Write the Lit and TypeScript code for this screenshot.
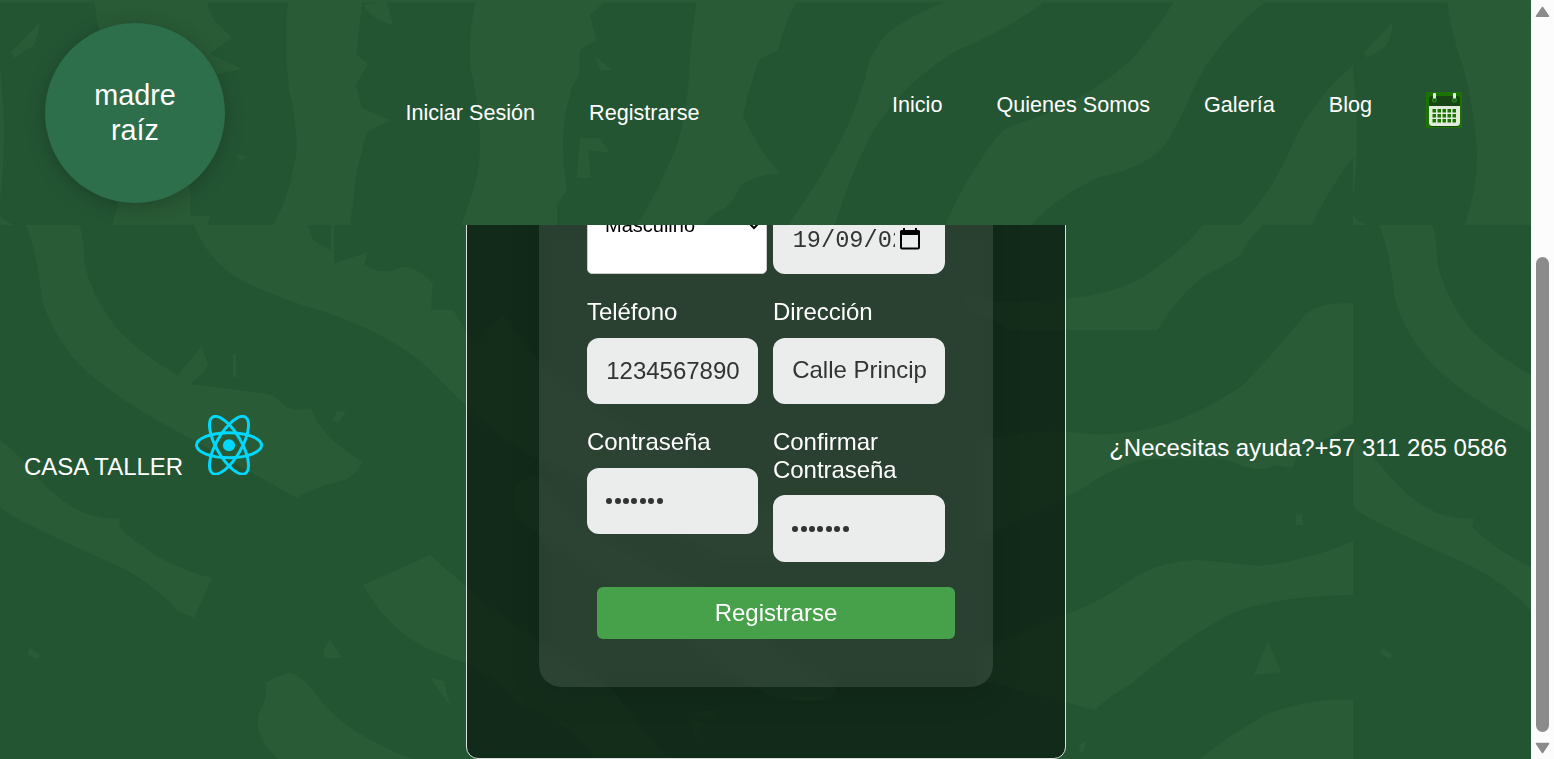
import { LitElement, html, css, svg } from "lit";
import { customElement } from "lit/decorators.js";

/* Organic shapes of the leafy wallpaper: one 1353px wide tile. */
const HEADER_SHAPES = [
  "M0 70Q8 135 0 200ZM0 216Q6 222 14 225H0Z",
  "M40 22Q39 36 33 46L14 58L11 52Z",
  "M94 0Q98 35 110 66Q121 110 124 150Q125 185 112 225H207L210 216H191L190 188L180 150L218 74L242 69L210 54L232 38L214 20L208 8V0Z",
  "M288 0Q284 50 289 90Q301 140 294 165Q288 200 273 225H350L357 170L367 132L391 120L362 108L356 85L368 64L356 54L360 20L363 0Z",
  "M363 5Q372 20 393 25L386 0Z",
  "M476 0Q467 40 471 70Q483 120 479 165Q474 195 461 225H557V205L567 190Q560 150 565 115L572 87L579 75L580 50L596 40L590 15L606 0Z",
  "M594 55L612 70L600 70Z",
  "M580 138H600L610 153L588 150L591 178H577Z",
  "M697 0Q690 40 689 75Q686 125 672 157Q655 197 637 225H703Q716 211 722 210Q732 205 740 186Q752 176 780 173Q758 150 743 115Q750 85 759 60L778 50Q785 22 797 0Z",
  "M950 0Q900 20 885 36Q868 55 865 80Q855 110 842 138Q820 180 788 225H835Q850 175 872 133Q905 80 958 50Q1015 26 1046 0Z",
  "M1175 0Q1155 32 1135 56Q1090 100 1020 123Q1003 128 996 138Q965 178 945 225H1031Q1060 194 1100 177Q1152 166 1168 140Q1183 115 1192 92Q1214 42 1268 0Z",
  "M1353 65Q1308 105 1290 150Q1270 195 1240 225H1312Q1325 195 1353 157Z",
  "M236 155L247 156L241 161Z",
];
const BODY_SHAPES = [
  "M26 225Q37 252 42 300Q58 350 97 380Q130 407 193 440L297 498Q310 488 345 480Q358 472 363 462Q320 437 311 408Q292 413 283 404Q274 393 262 393L190 384L205 371L208 365L202 346L178 375Q145 357 118 330Q90 295 84 260Q84 235 79 225Z",
  "M233 354H236V377H233Z",
  "M0 440Q20 455 40 480Q80 523 121 518L119 527Q160 566 212 578L194 618L178 611Q155 585 120 567Q60 540 30 525Q5 513 0 506Z",
  "M194 225Q204 253 230 273Q250 288 305 306Q380 327 425 365L466 406Q510 450 560 470L720 560H840Q740 480 640 430Q550 390 503 315L475 345L453 310H431L433 283Q410 262 400 268Q385 276 364 265L368 252L335 263L330 250L313 240L308 225Z",
  "M331 225H334V262H331Z",
  "M430 555L363 585Q395 645 466 663Q500 680 520 705Q570 720 595 759H668L612 690L507 620Q475 595 430 555Z",
  "M289 672L266 682Q267 700 260 711Q251 735 278 759H412Q348 734 322 702Q303 675 289 672Z",
  "M330 639Q320 652 325 658H342Z",
  "M430 678L444 681L450 706Z",
  "M30 648L41 656L36 659L27 654Z",
  "M333 420L337 411L346 412L338 423Z",
  "M520 520Q500 485 535 475L590 530L720 600L800 665Q860 690 820 700Q780 705 740 680Z",
  "M690 713L717 710L710 720Z",
  "M690 718L702 722L697 741Z",
  "M960 300Q1110 310 1160 265Q1185 247 1203 225H1263Q1248 239 1240 256Q1220 268 1206 275Q1178 295 1158 330H1010Z",
  "M1353 303Q1318 302 1305 315Q1250 380 1240 387Q1165 438 1090 434Q1040 427 980 440V540Q1040 510 1080 490Q1130 455 1170 459Q1215 453 1240 465Q1263 473 1275 465L1292 468L1300 450Q1335 436 1353 422Z",
  "M1353 541Q1310 560 1260 566L1200 560Q1165 560 1135 577Q1095 605 1066 614Q1020 633 980 650V680L1095 710Q1110 695 1130 685Q1185 637 1235 612Q1285 595 1353 595Z",
  "M1268 642Q1260 660 1254 675L1281 672Z",
  "M1199 759Q1230 735 1265 715Q1310 697 1353 700V759Z",
  "M1080 744L1087 741L1083 753L1079 752Z",
  "M1296 515L1302 514L1303 525H1296Z",
];

@customElement("leaf-wallpaper")
class LeafWallpaper extends LitElement {
  static styles = css`
    :host { display: block; }
    .art { display: block; }
    .dark { fill: #235533; }
    .light { fill: #295b36; }
  `;
  render() {
    const tile = () => [...HEADER_SHAPES, ...BODY_SHAPES].map((d) => svg`<path d=${d}/>`);
    return html`<svg class="art" width="1531" height="759" viewBox="0 0 1531 759">
      <rect class="dark" width="1531" height="759"/>
      <rect class="light" width="1531" height="2.5"/>
      <g class="light">${tile()}</g>
      <g class="light" transform="translate(1353 0)">${tile()}</g>
    </svg>`;
  }
}

@customElement("site-header")
class SiteHeader extends LitElement {
  static styles = css`
    :host { display: flex; height: 225px; color: #fff; font-size: 21.6px; line-height: 25px; white-space: nowrap; }
    .logo {
      margin: 23px 0 0 45px; width: 180px; height: 180px; box-sizing: border-box; flex: none;
      border-radius: 50%; background: #2d6e4b; box-shadow: 0 4px 20px rgba(0, 0, 0, 0.22);
      display: flex; align-items: center; justify-content: center; text-align: center;
      font-size: 28.8px; line-height: 35px;
    }
    .group { display: flex; gap: 54px; align-items: flex-start; }
    .account { margin: 100px 0 0 180.4px; width: 486.6px; }
    .pages { margin-top: 92px; }
    .cal { display: block; }
  `;
  render() {
    const cells = [0, 1, 2].flatMap((r) => [0, 1, 2, 3, 4].map((c) => svg`<rect x=${6.5 + c * 5} y=${17 + r * 5} width="3.5" height="3.5"/>`));
    return html`
      <div class="logo"><span>madre<br>raíz</span></div>
      <nav class="group account"><span>Iniciar Sesión</span><span>Registrarse</span></nav>
      <nav class="group pages">
        <span>Inicio</span><span>Quienes Somos</span><span>Galería</span><span>Blog</span>
        <svg class="cal" width="36" height="36" viewBox="0 0 36 36">
          <rect width="36" height="36" fill="#1d7300"/>
          <path d="M3 31V7a3 3 0 0 1 3-3h25a3 3 0 0 1 3 3v24a3.5 3.5 0 0 1-3.5 4h-24A3.5 3.5 0 0 1 3 31z" fill="#174513"/>
          <path d="M3 14h31v16.5a3.5 3.5 0 0 1-3.5 3.5h-24A3.5 3.5 0 0 1 3 30.5z" fill="#e0ebdc"/>
          <circle cx="8.4" cy="8" r="2.6" fill="#24821d"/><circle cx="28.4" cy="8" r="2.6" fill="#24821d"/>
          <circle cx="8.4" cy="8.3" r="1" fill="#174513"/><circle cx="28.4" cy="8.3" r="1" fill="#174513"/>
          <rect x="7" y="1" width="3" height="5.5" rx="1" fill="#e4ede2"/><rect x="27" y="1" width="3" height="5.5" rx="1" fill="#e4ede2"/>
          <g fill="#1d7300">${cells}</g>
        </svg>
      </nav>`;
  }
}

@customElement("register-form")
class RegisterForm extends LitElement {
  static styles = css`
    :host { display: block; box-sizing: border-box; height: 594px; margin-top: -60px; padding: 0 72px; background: rgba(0, 0, 0, 0.5); border: 1px solid #dcdfdd; border-radius: 12px; overflow: hidden; }
    .card {
      box-sizing: border-box; height: 521px; padding: 41.6px 48px 48px; color: #fff;
      background: rgba(255, 255, 255, 0.105); border-radius: 0 0 22px 22px;
      box-shadow: 0 8px 32px rgba(0, 0, 0, 0.1); backdrop-filter: blur(5px);
      font-size: 24px; line-height: 27.6px;
    }
    .grid { display: grid; grid-template-columns: 171px 172px; column-gap: 15px; row-gap: 24px; align-items: start; }
    .label { margin-bottom: 12px; letter-spacing: -0.05px; }
    .input {
      display: flex; align-items: center; box-sizing: border-box; height: 66.4px; padding: 0 19.2px;
      border-radius: 12px; background: rgba(255, 255, 255, 0.91); color: #333;
    }
    .value { overflow: hidden; white-space: nowrap; flex: 1; }
    .raised { margin-top: -2px; }
    .dots { display: flex; gap: 2.3px; margin-top: 0.8px; }
    .dot { width: 6.1px; height: 6.4px; border-radius: 50%; background: #333; }
    .select {
      display: flex; justify-content: space-between; box-sizing: border-box; width: 180px; height: 66.4px;
      padding: 3px 7px 0 17px; border: 1px solid #ccc; border-radius: 5px; background: #fff; color: #000; font-size: 20px;
    }
    .chevron { margin-top: 11px; }
    .day { font-family: "Liberation Mono", monospace; font-size: 23.6px; flex: 0 0 102px; margin-left: 0.5px; }
    .picker { margin: -4px 0 0 5px; flex: none; }
    .submit { margin: 25px 0 0 10px; width: 358px; height: 52px; border-radius: 6px; background: #47a04a; display: flex; align-items: center; justify-content: center; }
  `;
  private dots() {
    return html`<div class="input"><div class="dots">${[1, 2, 3, 4, 5, 6, 7].map(() => html`<i class="dot"></i>`)}</div></div>`;
  }
  render() {
    return html`<div class="card">
      <div class="grid">
        <div class="select"><span>Masculino</span>
          <svg class="chevron" width="10" height="8" viewBox="0 0 10 8"><path d="M1 1l4 4 4-4" fill="none" stroke="#000" stroke-width="2"/></svg>
        </div>
        <div class="input"><span class="value day">19/09/02</span>
          <svg class="picker" width="20" height="22" viewBox="0 0 20 22"><path d="M1 4h18v15.5a1 1 0 0 1-1 1H2a1 1 0 0 1-1-1z" fill="none" stroke="#000" stroke-width="2"/><path d="M0 3.5a1.5 1.5 0 0 1 1.5-1.5h17A1.5 1.5 0 0 1 20 3.5V7H0zM3 0h2v4h-2zM15 0h2v4h-2z"/></svg>
        </div>
        <div><div class="label">Teléfono</div><div class="input"><span class="value">1234567890</span></div></div>
        <div><div class="label">Dirección</div><div class="input"><span class="value raised">Calle Principal</span></div></div>
        <div><div class="label">Contraseña</div>${this.dots()}</div>
        <div><div class="label">Confirmar Contraseña</div>${this.dots()}</div>
      </div>
      <div class="submit">Registrarse</div>
    </div>`;
  }
}

@customElement("app-root")
class AppRoot extends LitElement {
  static styles = css`
    :host { display: flex; width: 1554px; height: 759px; overflow: hidden; font-family: "Liberation Sans", Arial, sans-serif; }
    .view { display: grid; width: 1531px; height: 759px; }
    .layer { grid-area: 1 / 1; min-width: 0; }
    .main { display: grid; grid-template-columns: 466px 600px 465px; height: 534px; overflow: hidden; align-items: start; color: #fff; font-size: 24px; line-height: 28px; white-space: nowrap; }
    .brand { display: flex; align-items: baseline; gap: 12px; padding: 189.5px 0 0 24px; }
    .help { padding: 209px 24px 0 0; text-align: right; }
    .form { white-space: normal; }
    .scroll { display: flex; flex-direction: column; align-items: center; width: 23px; background: #fcfcfc; }
    .up { margin-top: 6px; }
    .thumb { margin-top: 240px; width: 13px; height: 475px; border-radius: 7px; background: #8b8b8b; }
    .down { margin-top: 10px; }
  `;
  render() {
    return html`
      <div class="view">
        <leaf-wallpaper class="layer"></leaf-wallpaper>
        <div class="layer">
          <site-header></site-header>
          <main class="main">
            <div class="brand"><span>CASA TALLER</span>
              <svg width="68" height="60.5" viewBox="-11.5 -10.232 23 20.463"><circle r="2.05" fill="#00d8ff"/><g fill="none" stroke="#00d8ff"><ellipse rx="11" ry="4.2"/><ellipse rx="11" ry="4.2" transform="rotate(60)"/><ellipse rx="11" ry="4.2" transform="rotate(120)"/></g></svg>
            </div>
            <register-form class="form"></register-form>
            <div class="help">¿Necesitas ayuda?+57 311 265 0586</div>
          </main>
        </div>
      </div>
      <div class="scroll">
        <svg class="up" width="15" height="11" viewBox="0 0 15 11"><path d="M7.5 1.5L13.5 10.2H1.5z" fill="#8b8b8b" stroke="#8b8b8b" stroke-width="1.6" stroke-linejoin="round"/></svg>
        <div class="thumb"></div>
        <svg class="down" width="15" height="12" viewBox="0 0 15 12"><path d="M7.5 10.5L13.5 1.5H1.5z" fill="#8b8b8b" stroke="#8b8b8b" stroke-width="1.6" stroke-linejoin="round"/></svg>
      </div>`;
  }
}
